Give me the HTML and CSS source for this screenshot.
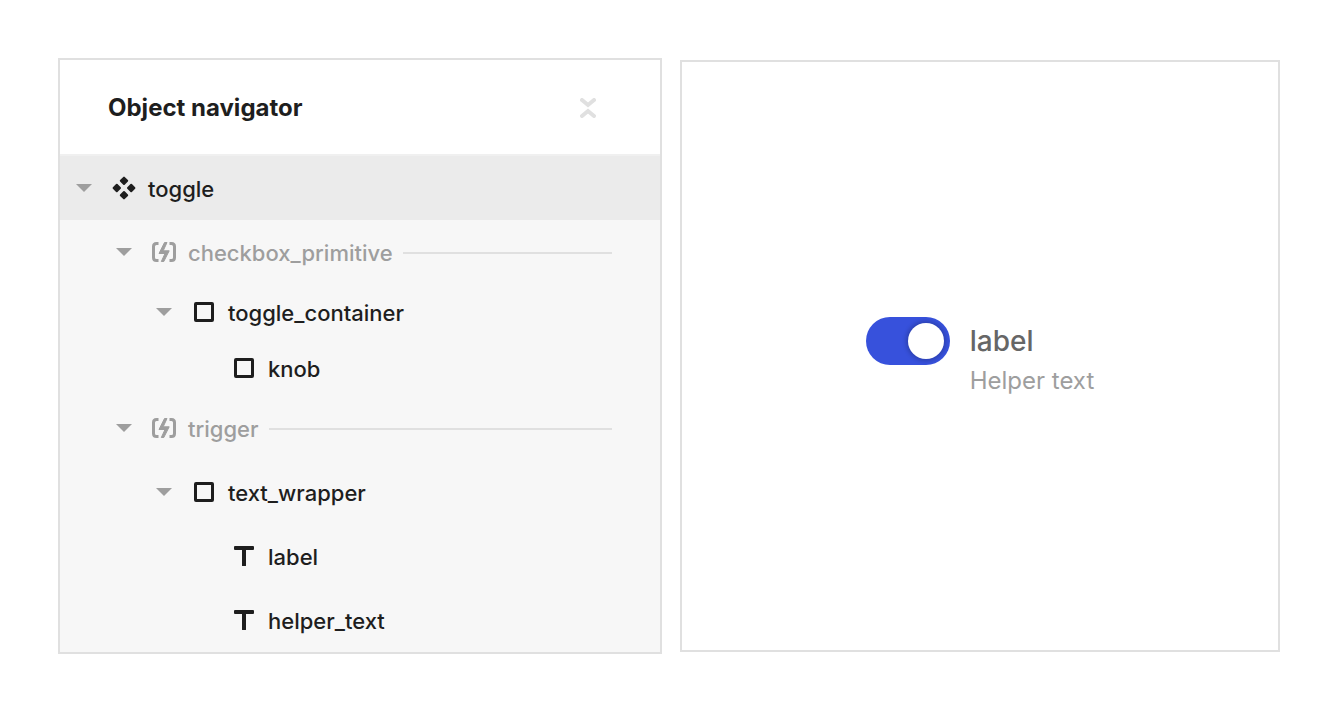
FILE: index.html
```html
<!DOCTYPE html>
<html lang="en">
<head>
<meta charset="utf-8">
<meta name="viewport" content="width=device-width, initial-scale=1">
<title>Object navigator</title>
<link rel="stylesheet" href="styles.css">
</head>
<body>
<svg class="defs" aria-hidden="true">
  <symbol id="arrow" viewBox="0 0 16 8"><path d="M0 0h16L8 8z"/></symbol>
  <symbol id="component" viewBox="0 0 24 24">
    <path stroke-width="2" stroke-linejoin="round" stroke="currentColor" d="M12 1.600l3.200 3.200L12 8l-3.200-3.200zM12 16l3.200 3.200-3.200 3.200-3.200-3.200zM4.800 8.800L8 12l-3.200 3.200L1.600 12zM19.200 8.800l3.200 3.200-3.200 3.200L16 12z"/>
  </symbol>
  <symbol id="primitive" viewBox="0 0 24 24">
    <path fill="none" stroke="currentColor" stroke-width="3" d="M6.500 3.500H4.500Q1.500 3.500 1.500 6.500V17.500Q1.500 20.500 4.500 20.500H6.500M17.500 3.500H19.500Q22.500 3.500 22.500 6.500V17.500Q22.500 20.500 19.500 20.500H17.500"/>
    <path stroke="currentColor" stroke-width="1" stroke-linejoin="round" d="M12.500 2.500H15L11.200 10.800H17.200L11.800 21.500H9.300L13 13.500H7z"/>
  </symbol>
  <symbol id="box" viewBox="0 0 24 24"><rect x="3.500" y="3.500" width="17" height="17" rx="0.500" fill="none" stroke="currentColor" stroke-width="3"/></symbol>
  <symbol id="text" viewBox="0 0 24 24"><rect x="2" y="2" width="20" height="4" rx="1"/><rect x="10" y="3" width="4" height="19" rx="0.500"/></symbol>
</svg>
<main class="page">
  <section class="panel navigator">
    <header class="header">
      <h1 class="title">Object navigator</h1>
      <button class="collapse" type="button" aria-label="Collapse all">
        <svg class="collapse-icon" viewBox="0 0 16 20"><path d="M2 2l6 5 6-5M2 18l6-5 6 5"/></svg>
      </button>
    </header>
    <ul class="tree">
      <li>
        <div class="row selected">
          <button class="toggle" type="button" aria-label="Collapse toggle"><svg class="arrow"><use href="#arrow"/></svg></button>
          <svg class="icon"><use href="#component"/></svg><span class="name">toggle</span>
        </div>
        <ul class="branch">
          <li>
            <div class="row muted">
              <button class="toggle" type="button" aria-label="Collapse checkbox_primitive"><svg class="arrow"><use href="#arrow"/></svg></button>
              <svg class="icon"><use href="#primitive"/></svg><span class="name">checkbox_primitive</span><span class="rule"></span>
            </div>
            <ul class="branch">
              <li>
                <div class="row compact">
                  <button class="toggle" type="button" aria-label="Collapse toggle_container"><svg class="arrow"><use href="#arrow"/></svg></button>
                  <svg class="icon"><use href="#box"/></svg><span class="name">toggle_container</span>
                </div>
                <ul class="branch">
                  <li><div class="row compact leaf"><svg class="icon"><use href="#box"/></svg><span class="name">knob</span></div></li>
                </ul>
              </li>
            </ul>
          </li>
          <li>
            <div class="row muted">
              <button class="toggle" type="button" aria-label="Collapse trigger"><svg class="arrow"><use href="#arrow"/></svg></button>
              <svg class="icon"><use href="#primitive"/></svg><span class="name">trigger</span><span class="rule"></span>
            </div>
            <ul class="branch">
              <li>
                <div class="row">
                  <button class="toggle" type="button" aria-label="Collapse text_wrapper"><svg class="arrow"><use href="#arrow"/></svg></button>
                  <svg class="icon"><use href="#box"/></svg><span class="name">text_wrapper</span>
                </div>
                <ul class="branch">
                  <li><div class="row leaf"><svg class="icon"><use href="#text"/></svg><span class="name">label</span></div></li>
                  <li><div class="row leaf"><svg class="icon"><use href="#text"/></svg><span class="name">helper_text</span></div></li>
                </ul>
              </li>
            </ul>
          </li>
        </ul>
      </li>
    </ul>
  </section>
  <section class="panel preview">
    <div class="field">
      <input class="switch" type="checkbox" role="switch" id="switch" aria-describedby="helper" checked>
      <div class="field-text">
        <label class="label" for="switch">label</label>
        <span class="helper" id="helper">Helper text</span>
      </div>
    </div>
  </section>
</main>
</body>
</html>
```
FILE: styles.css
```css
* {
  box-sizing: border-box;
}

body {
  margin: 0;
  background: #fff;
  color: #1e1e1e;
  font-family: Inter, "Liberation Sans", sans-serif;
  font-size: 22px;
  font-weight: 500;
}

button {
  padding: 0;
  border: 0;
  background: none;
  cursor: pointer;
}

svg {
  display: block;
  fill: currentColor;
}

.defs {
  position: absolute;
  width: 0;
  height: 0;
}

.page {
  display: flex;
  gap: 18px;
  padding: 58px 60px 58px 58px;
}

.panel {
  border: 2px solid #e0e0e0;
  min-width: 0;
}

.navigator {
  flex: 604 1 0;
  background: #f7f7f7;
}

.preview {
  flex: 600 1 0;
  display: flex;
  align-items: center;
  justify-content: center;
  margin: 2px 0;
}

.header {
  display: flex;
  align-items: center;
  justify-content: space-between;
  padding: 33px 64px 31px 48px;
  border-bottom: 2px solid #f0f0f0;
  background: #fff;
}

.title {
  margin: 0;
  font-size: 24px;
  font-weight: 700;
  line-height: 30px;
}

.collapse {
  color: #e0e0e0;
}

.collapse-icon {
  width: 16px;
  height: 20px;
  fill: none;
  stroke: currentColor;
  stroke-width: 4;
  stroke-linecap: round;
}

.tree,
.branch {
  margin: 0;
  padding: 0;
  list-style: none;
}

.branch {
  padding-left: 40px;
}

.row {
  display: flex;
  align-items: center;
  padding: 16px 48px 16px 16px;
}

.compact {
  padding-top: 12px;
  padding-bottom: 12px;
}

.leaf {
  padding-left: 52px;
}

.selected {
  background: #ebebeb;
}

.muted {
  color: #9e9e9e;
}

.toggle {
  margin-right: 20px;
  color: #9e9e9e;
}

.arrow {
  width: 16px;
  height: 8px;
}

.icon {
  flex: none;
  width: 24px;
  height: 24px;
  margin-right: 12px;
}

.name {
  padding-top: 2px;
  line-height: 30px;
}

.rule {
  flex: 1;
  height: 2px;
  margin-top: 2px;
  margin-left: 10px;
  background: #e0e0e0;
}

.field {
  display: flex;
  gap: 20px;
  padding-top: 2px;
}

.switch {
  appearance: none;
  display: flex;
  flex: none;
  width: 84px;
  height: 48px;
  margin: 0;
  padding: 6px;
  border-radius: 24px;
  background: #9e9e9e;
  cursor: pointer;
}

.switch::before {
  content: "";
  width: 36px;
  height: 36px;
  border-radius: 50%;
  background: #fff;
  box-shadow: 0 0 4px 2px rgb(0 0 0 / 20%);
}

.switch:checked {
  justify-content: flex-end;
  background: #3751dc;
}

.field-text {
  display: flex;
  flex-direction: column;
}

.label {
  color: #666;
  font-size: 28px;
  line-height: 48px;
}

.helper {
  color: #9e9e9e;
  font-size: 24px;
  font-weight: 400;
  line-height: 32px;
}
```
